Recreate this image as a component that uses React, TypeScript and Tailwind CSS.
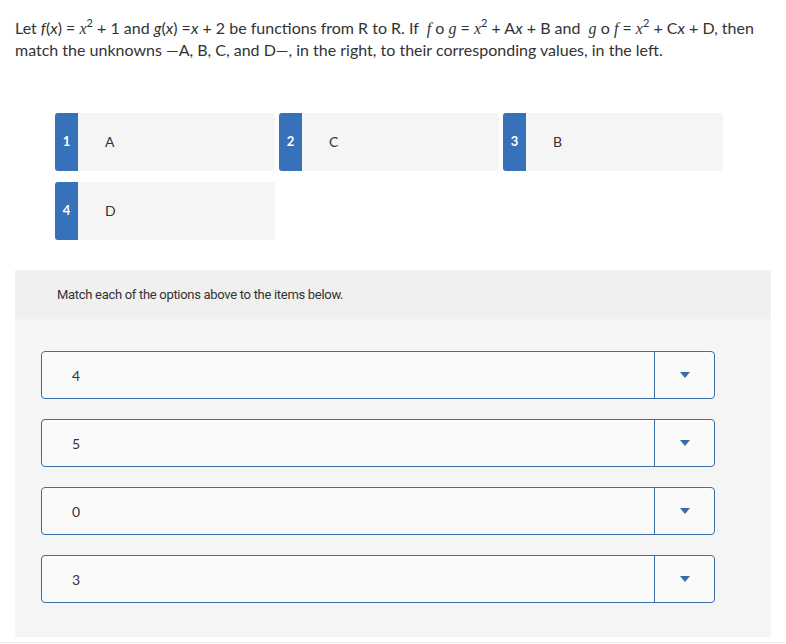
import React from "react";

const Card = ({ n, label }: { n: string; label: string }) => (
  <div className="flex h-[58px] w-[220px] overflow-hidden rounded-[3px] bg-[#f5f5f5]">
    <div className="flex w-[23px] items-center justify-center bg-[#3572b9] text-[13px] font-bold text-white">
      {n}
    </div>
    <div className="flex items-center pb-[2px] pl-[27px] text-[14px] text-[#333]">{label}</div>
  </div>
);

const Dropdown = ({ value }: { value: string }) => (
  <div className="flex h-[48px] w-[674px] rounded-[4px] border border-[#3b6ea6] bg-[#fafafa]">
    <div className="flex flex-1 items-center pl-[30px] text-[14px] text-[#333]">{value}</div>
    <div className="flex w-[60px] items-center justify-center border-l border-[#3b6ea6]">
      <svg width="10" height="6" viewBox="0 0 10 6">
        <path d="M0 0 L10 0 L5 6 Z" fill="#3a6aa8" />
      </svg>
    </div>
  </div>
);

const M = ({ children }: { children: React.ReactNode }) => (
  <span className="italic" style={{ fontFamily: "'Liberation Serif', serif" }}>
    {children}
  </span>
);

const Sq = () => <span className="relative -top-[7px] text-[11px] leading-none">2</span>;

export default function App() {
  return (
    <div className="h-[644px] w-[786px] bg-white" style={{ fontFamily: "Lato, 'Open Sans', sans-serif" }}>
      <p className="px-[15px] pt-[17px] text-[16px] leading-[21px] text-[#333]">
        Let <i>f</i>(<i>x</i>) = <M>x</M>
        <Sq /> + 1 and <i>g</i>(<i>x</i>) =<i>x</i> + 2 be functions from R to R. If&nbsp; <M>f</M> o <M>g</M> ={" "}
        <M>x</M>
        <Sq /> + A<i>x</i> + B and&nbsp; <M>g</M> o <M>f</M> = <M>x</M>
        <Sq /> + C<i>x</i> + D, then
        <br />
        match the unknowns —A, B, C, and D—, in the right, to their corresponding values, in the left.
      </p>

      <div className="mt-[53px] grid w-fit grid-cols-3 gap-x-[4px] gap-y-[11px] pl-[55px]">
        <Card n="1" label="A" />
        <Card n="2" label="C" />
        <Card n="3" label="B" />
        <Card n="4" label="D" />
      </div>

      <div className="mx-[15px] mt-[30px] bg-[#f5f5f5]">
        <div className="flex h-[49px] items-center bg-[#f0f0f0] pl-[42px] text-[13px] tracking-[-0.3px] text-[#333]" style={{ fontFamily: "Roboto, sans-serif" }}>
          Match each of the options above to the items below.
        </div>
        <div className="flex flex-col gap-[20px] pb-[34px] pl-[26px] pt-[32px]">
          <Dropdown value="4" />
          <Dropdown value="5" />
          <Dropdown value="0" />
          <Dropdown value="3" />
        </div>
      </div>
      <div className="mt-[5px] h-px bg-[#ececec]" />
    </div>
  );
}
